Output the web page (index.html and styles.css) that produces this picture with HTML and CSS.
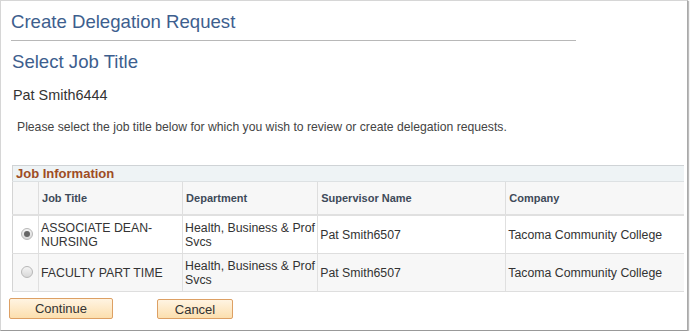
FILE: index.html
```html
<!DOCTYPE html>
<html lang="en">
<head>
    <meta charset="UTF-8">
    <title>Create Delegation Request</title>
    <link rel="stylesheet" href="styles.css">
</head>
<body>
    <div class="page">
        <h1 class="page-title">Create Delegation Request</h1>
        <h2 class="sub-title">Select Job Title</h2>
        <p class="person">Pat Smith6444</p>
        <p class="instructions">Please select the job title below for which you wish to review or create delegation requests.</p>

        <table class="grid">
            <colgroup>
                <col class="c-sel">
                <col class="c-job">
                <col class="c-dept">
                <col class="c-sup">
                <col class="c-comp">
            </colgroup>
            <thead>
                <tr class="grid-caption">
                    <th colspan="5">Job Information</th>
                </tr>
                <tr class="grid-head">
                    <th></th>
                    <th>Job Title</th>
                    <th>Department</th>
                    <th>Supervisor Name</th>
                    <th>Company</th>
                </tr>
            </thead>
            <tbody>
                <tr>
                    <td class="sel"><span class="radio checked"></span></td>
                    <td>ASSOCIATE DEAN-<br>NURSING</td>
                    <td>Health, Business &amp; Prof<br>Svcs</td>
                    <td>Pat Smith6507</td>
                    <td>Tacoma Community College</td>
                </tr>
                <tr class="alt">
                    <td class="sel"><span class="radio"></span></td>
                    <td>FACULTY PART TIME</td>
                    <td>Health, Business &amp; Prof<br>Svcs</td>
                    <td>Pat Smith6507</td>
                    <td>Tacoma Community College</td>
                </tr>
            </tbody>
        </table>

        <div class="actions">
            <button class="btn btn-continue">Continue</button>
            <button class="btn btn-cancel">Cancel</button>
        </div>
    </div>
</body>
</html>
```

FILE: styles.css
```css
body {
    margin: 0;
    font-family: "Liberation Sans", Arial, sans-serif;
    color: #333;
    background: #fff;
}

.page {
    box-sizing: border-box;
    width: 688px;
    height: 331px;
    border: 1px solid #d6d6d6;
    border-right-color: #aaa;
    border-bottom-color: #999;
    box-shadow: 1px 1px 1px #bbb;
    padding: 0 0 0 10px;
}

.page-title {
    width: 565px;
    margin: 0;
    padding: 10px 0 7px 0;
    font-size: 18.6px;
    font-weight: normal;
    color: #3d5e8e;
    border-bottom: 1px solid #b8b8b8;
    line-height: 22px;
}

.sub-title {
    margin: 10px 0 0 1px;
    font-size: 18.6px;
    font-weight: normal;
    color: #3d5e8e;
    line-height: 22px;
}

.person {
    margin: 13px 0 0 2px;
    font-size: 14.4px;
    line-height: 18px;
}

.instructions {
    margin: 15px 0 0 6px;
    font-size: 12.2px;
    line-height: 16px;
    color: #444;
}

.grid {
    margin: 30px 0 0 1px;
    width: 672px;
    border-collapse: collapse;
    table-layout: fixed;
    font-size: 12.3px;
    border-left: 1px solid #d4d4d4;
}

.c-sel { width: 26px; }
.c-job { width: 144px; }
.c-dept { width: 135px; }
.c-sup { width: 188px; }
.c-comp { width: 178px; }

.grid-caption th {
    text-align: left;
    background: #eef3f5;
    color: #9e4c24;
    font-size: 13px;
    font-weight: bold;
    height: 15px;
    padding: 0 3px;
    line-height: 15px;
    border-top: 1px solid #cfd3d6;
    border-bottom: 1px solid #dde1e3;
}

.grid-head th {
    text-align: left;
    background: #f7f7f7;
    color: #3e4a59;
    font-size: 11px;
    font-weight: bold;
    height: 32px;
    padding: 0 3px;
    border-left: 1px solid #dedede;
    border-bottom: 2px solid #e0e0e0;
}

.grid-head th:first-child {
    border-left: none;
}

.grid td {
    height: 37px;
    padding: 0 2px;
    line-height: 14px;
    color: #333;
    border-left: 1px solid #e0e0e0;
    border-bottom: 1px solid #dedede;
    vertical-align: middle;
}

.grid td.sel {
    border-left: none;
    text-align: center;
    padding: 0;
}

.grid tr.alt td {
    background: #f7f7f7;
}

.radio {
    display: inline-block;
    box-sizing: border-box;
    width: 12px;
    height: 12px;
    border-radius: 50%;
    border: 1px solid #b8b8b8;
    background: linear-gradient(#f4f4f4, #d8d8d8);
    position: relative;
    top: 1px;
    left: 1px;
}

.radio.checked::after {
    content: "";
    position: absolute;
    left: 2px;
    top: 2px;
    width: 6px;
    height: 6px;
    border-radius: 50%;
    background: #666;
}

.actions {
    display: flex;
    align-items: center;
    margin: 6px 0 0 -2px;
}

.btn {
    font-family: "Liberation Sans", Arial, sans-serif;
    font-size: 13px;
    color: #333;
    height: 21px;
    padding: 0;
    border: 1px solid #dda064;
    border-radius: 2px;
    background: linear-gradient(#fff4e2, #fcdfae);
    cursor: pointer;
}

.btn-continue {
    width: 104px;
}

.btn-cancel {
    width: 76px;
    height: 20px;
    margin: 1px 0 0 44px;
}
```
